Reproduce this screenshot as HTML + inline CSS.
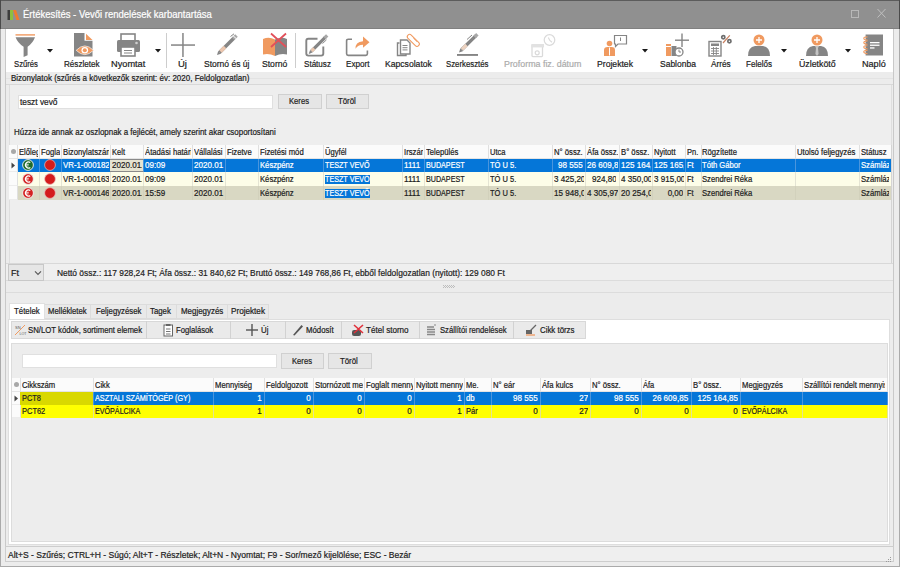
<!DOCTYPE html><html><head><meta charset='utf-8'><style>
*{margin:0;padding:0;box-sizing:border-box}
html,body{width:900px;height:567px;overflow:hidden;background:#efefef;font-family:"Liberation Sans",sans-serif;color:#1e1e1e;-webkit-text-stroke:0.2px currentColor}
body>div,body>svg{position:absolute}
.t{white-space:nowrap;position:absolute}
.g{position:absolute;overflow:hidden;white-space:nowrap;padding:0 1.2px 0 1.5px}
.w{overflow:hidden;height:100%}
.r{text-align:right;padding-right:2.4px}
</style></head><body><div style="left:0px;top:0px;width:900px;height:567px;background:#ececec;border:1px solid #aaaaaa"></div>
<div style="left:0px;top:0px;width:900px;height:29px;background:#909090;border-top:1px solid #5c5c5c;border-bottom:1px solid #808080"></div>
<div style="left:0px;top:0px;width:1px;height:29px;background:#4a4a4a"></div>
<div style="left:899px;top:0px;width:1px;height:29px;background:#4a4a4a"></div>
<svg style="left:7px;top:9px" width="13" height="12" viewBox="0 0 13 12"><rect x="0.5" y="1" width="2.5" height="10" fill="#3d3d3d"/><rect x="3" y="1" width="3" height="10" fill="#8cbf3f"/><polygon points="6,1 9,1 12.5,11 9.5,11" fill="#f07a2c"/></svg>
<div class="t" style="left:22.5px;top:6.5px;height:16px;line-height:16px;color:#ffffff"><span style="display:inline-block;vertical-align:top;font-size:10.3px;transform:scaleX(0.9218);transform-origin:left;">Értékesítés - Vevői rendelések karbantartása</span></div>
<svg style="left:850px;top:9px" width="40" height="12" viewBox="0 0 40 12"><rect x="1.5" y="1.5" width="7" height="7" fill="none" stroke="#b8b8b8" stroke-width="1"/><path d="M27.5 0 L35.5 8.5 M35.5 0 L27.5 8.5" stroke="#c0c0c0" stroke-width="1"/></svg>
<div style="left:6px;top:29px;width:887px;height:43.5px;background:#ffffff;border-bottom:1px solid #cacaca"></div>
<div style="left:5px;top:29px;width:1px;height:533px;background:#c9c9c9"></div>
<div style="left:893px;top:29px;width:1px;height:533px;background:#c9c9c9"></div>
<svg style="left:15px;top:33px" width="21" height="25" viewBox="0 0 21 25"><rect x="0.5" y="1.2" width="19.5" height="1.4" fill="#f09a60"/><path d="M0.6 4.3 H20 Q18 10 12.6 13.8 V22.2 L8.6 24 V13.8 Q2.6 10 0.6 4.3Z" fill="#858585"/></svg>
<svg style="left:73px;top:32px" width="22" height="26" viewBox="0 0 22 26"><polygon points="1,1 11.5,1 11.5,8.7 19.5,8.7 19.5,24.5 1,24.5" fill="#858585"/><polygon points="13,1.8 13,8 19.5,8" fill="#f09a60"/><path d="M3.2 18.3 Q11.8 9.5 20.5 18.3 Q11.8 27 3.2 18.3Z" fill="#f09a60" stroke="#f4f4f4" stroke-width="0.7"/><circle cx="11.8" cy="18.3" r="3.3" fill="#fff"/><circle cx="11.8" cy="18.3" r="2" fill="#f09a60"/></svg>
<svg style="left:116px;top:33px" width="25" height="24" viewBox="0 0 25 24"><rect x="5" y="1" width="14" height="7" fill="#fff" stroke="#858585" stroke-width="1.6"/><rect x="1" y="7" width="23" height="12" rx="1.5" fill="#858585"/><circle cx="20.5" cy="10" r="1.3" fill="#cfcfcf"/><rect x="5" y="14" width="14" height="9" fill="#fff" stroke="#858585" stroke-width="1.6"/><rect x="8" y="17" width="8" height="1" fill="#858585"/><rect x="8" y="19.5" width="8" height="1" fill="#858585"/></svg>
<div style="left:166px;top:33px;width:1px;height:35px;background:#cdcdcd"></div>
<svg style="left:170px;top:32px" width="26" height="26" viewBox="0 0 26 26"><rect x="1" y="12.3" width="24" height="1.5" fill="#858585"/><rect x="12.2" y="1" width="1.5" height="24" fill="#858585"/></svg>
<svg style="left:215px;top:33px" width="25" height="24" viewBox="0 0 25 24"><path d="M4.5 19.5 L19 5" stroke="#858585" stroke-width="3.6" stroke-linecap="butt"/><path d="M18.2 5.8 L21.5 2.5" stroke="#a8a8a8" stroke-width="3.6"/><path d="M19.5 4.5 L20.5 3.5" stroke="#fff" stroke-width="3.8" stroke-dasharray="0.7 0.9"/><path d="M15.5 3.5 L19 0.8" stroke="#858585" stroke-width="1"/><path d="M5.5 18.5 L10 14" stroke="#ecc6ae" stroke-width="3.6"/><polygon points="3.2,18 6,20.8 2,22" fill="#858585"/></svg>
<svg style="left:262px;top:32px" width="27" height="25" viewBox="0 0 27 25"><path d="M1 7 Q7 4.5 13 7.5 V24 Q7 21 1 22.5Z" fill="#f09a60"/><path d="M13 7.5 Q19 4.5 25 7 V22.5 Q19 21 13 24Z" fill="#858585"/><path d="M9 1.5 L24 15 M24 1.5 L9 15" stroke="#e2505a" stroke-width="1.8"/></svg>
<div style="left:295px;top:33px;width:1px;height:35px;background:#cdcdcd"></div>
<svg style="left:304px;top:33px" width="27" height="25" viewBox="0 0 27 25"><path d="M13.5 5.8 H4.3 Q2.3 5.8 2.3 7.8 V20.6 Q2.3 22.6 4.3 22.6 H17.3 Q19.3 22.6 19.3 20.6 V13.5" fill="none" stroke="#858585" stroke-width="1.9"/><path d="M7.2 18.4 L21.2 4.4" stroke="#fff" stroke-width="5.6"/><path d="M7.2 18.4 L21.2 4.4" stroke="#858585" stroke-width="3.3"/><path d="M7.6 18 L10.2 15.4" stroke="#e9c6ad" stroke-width="3.3"/><path d="M20.6 5 L23.2 2.4" stroke="#a8a8a8" stroke-width="3.3"/><path d="M18.5 10.5 L22.5 6.8" stroke="#858585" stroke-width="0.9"/><polygon points="6,17.2 8.4,19.6 4.6,21" fill="#858585"/></svg>
<svg style="left:345px;top:33px" width="26" height="24" viewBox="0 0 26 24"><path d="M7 6.2 H3.2 Q1.6 6.2 1.6 7.8 V20.8 Q1.6 22.4 3.2 22.4 H20.8 Q22.4 22.4 22.4 20.8 V17.5" fill="none" stroke="#858585" stroke-width="1.6"/><path d="M10.5 15.8 Q10 9 18 8.2 V3.5 L24.5 9.2 L18 14.8 V11.8 Q13 11.8 10.5 15.8Z" fill="#f09a60"/></svg>
<svg style="left:395px;top:33px" width="27" height="25" viewBox="0 0 27 25"><path d="M4.5 10 H2.5 V22.5 H11 V20.5" fill="none" stroke="#858585" stroke-width="1.4"/><path d="M5.5 7 H12 L15 10 V21 H5.5Z" fill="#fff" stroke="#858585" stroke-width="1.4"/><rect x="7.5" y="12" width="5" height="1" fill="#858585"/><rect x="7.5" y="14.2" width="5" height="1" fill="#858585"/><rect x="7.5" y="16.4" width="5" height="1" fill="#858585"/><rect x="13.5" y="-1.6" width="4.6" height="15" rx="2.3" transform="translate(2.5 1.5) rotate(-45 15.8 5.9)" fill="none" stroke="#f09a60" stroke-width="1.1"/><path d="M18.3 5 L22 8.7" stroke="#f09a60" stroke-width="0.9"/></svg>
<svg style="left:456px;top:33px" width="24" height="24" viewBox="0 0 24 24"><path d="M5.6 16.8 L20 2.6" stroke="#858585" stroke-width="3.4"/><path d="M6 16.4 L10.5 12" stroke="#ecd2c0" stroke-width="3.4"/><path d="M18.6 4 L21.4 1.2" stroke="#a8a8a8" stroke-width="3.4"/><path d="M11 6.5 L16 2" stroke="#858585" stroke-width="1"/><polygon points="4.3,15.6 6.9,18.2 3,19.6" fill="#858585"/><rect x="1" y="21" width="21" height="1.9" fill="#858585"/></svg>
<svg style="left:529px;top:33px" width="28" height="25" viewBox="0 0 28 25"><rect x="3" y="11.8" width="10.5" height="11.8" rx="0.8" fill="none" stroke="#dadada" stroke-width="1.3"/><rect x="2.4" y="11" width="12.6" height="3.4" fill="#e2e2e2"/><circle cx="8.2" cy="19.8" r="2" fill="none" stroke="#dadada" stroke-width="1.2"/><circle cx="20.5" cy="7" r="5.3" fill="none" stroke="#dadada" stroke-width="1.2"/><path d="M19.3 4.5 L20.8 7.5 L23 9.2" fill="none" stroke="#dadada" stroke-width="1.1"/></svg>
<svg style="left:602px;top:33px" width="27" height="25" viewBox="0 0 27 25"><circle cx="7.5" cy="10.5" r="2.8" fill="#f09a60"/><path d="M2 23 V17 Q2 14 5.5 14 H9.5 Q13 14 13 17 V23Z" fill="#f09a60"/><rect x="7" y="14.5" width="1" height="8" fill="#fff"/><path d="M12.5 2.5 H24.5 V11 H16 L13.5 13.5 V11 H12.5Z" fill="#fff" stroke="#858585" stroke-width="1.2"/><rect x="18" y="4.5" width="1" height="3.5" fill="#858585"/></svg>
<svg style="left:664px;top:32px" width="27" height="26" viewBox="0 0 27 26"><rect x="2" y="12" width="5" height="12" fill="#f09a60"/><rect x="7.5" y="14" width="5" height="10" fill="#858585"/><rect x="2" y="14" width="5" height="1" fill="#fff"/><circle cx="15" cy="20" r="4" fill="#fff" stroke="#858585" stroke-width="1.3"/><path d="M15 17.5 V20 H17" fill="none" stroke="#858585" stroke-width="1"/><rect x="11" y="7.5" width="14" height="1.4" fill="#858585"/><rect x="17.3" y="1.5" width="1.4" height="13.5" fill="#858585"/></svg>
<svg style="left:707px;top:33px" width="27" height="25" viewBox="0 0 27 25"><rect x="2" y="8.5" width="12" height="14.5" fill="#fff" stroke="#858585" stroke-width="1.4"/><rect x="4" y="10.5" width="8" height="2.5" fill="#858585"/><path d="M4 15.5 H12 M4 18 H12 M4 20.5 H12 M6.5 14 V22 M9.3 14 V22" stroke="#858585" stroke-width="0.9"/><circle cx="16.3" cy="4.2" r="1.6" fill="none" stroke="#6e6e6e" stroke-width="1.7"/><circle cx="22.4" cy="8.3" r="1.6" fill="none" stroke="#6e6e6e" stroke-width="1.7"/><path d="M16 10 L22.8 2.4" stroke="#c98060" stroke-width="1.2"/></svg>
<svg style="left:747px;top:32px" width="24" height="25" viewBox="0 0 24 25"><path d="M1 24 Q1 15 8 14 H16 Q23 15 23 24Z" fill="#858585"/><circle cx="12" cy="8" r="5.5" fill="#f09a60"/><path d="M12 5 V11 M9 8 H15" stroke="#fff" stroke-width="1.3"/></svg>
<svg style="left:805px;top:32px" width="24" height="25" viewBox="0 0 24 25"><path d="M1 24 Q1 15 8 14 H16 Q23 15 23 24Z" fill="#858585"/><circle cx="12" cy="8" r="5.5" fill="#f09a60"/><path d="M12 5 V11 M9 8 H15" stroke="#fff" stroke-width="1.3"/><polygon points="10,14 14,14 13,16 13.6,22 12,24 10.4,22 11,16" fill="#c4c4c4"/></svg>
<svg style="left:862px;top:33px" width="23" height="24" viewBox="0 0 23 24"><rect x="3.6" y="1.5" width="17.4" height="21" fill="#858585"/><rect x="8" y="9" width="9.5" height="1.3" fill="#fff"/><rect x="8" y="11.6" width="9.5" height="1.3" fill="#fff"/><rect x="8" y="14.3" width="4.5" height="1.3" fill="#fff"/><path d="M5.5 3.9 Q1.5 3.9 1.8 5.5 Q2 7.1 5.5 7.1" fill="none" stroke="#f09a60" stroke-width="1.1"/><path d="M5.5 8.0 Q1.5 8.0 1.8 9.6 Q2 11.2 5.5 11.2" fill="none" stroke="#f09a60" stroke-width="1.1"/><path d="M5.5 12.700000000000001 Q1.5 12.700000000000001 1.8 14.3 Q2 15.9 5.5 15.9" fill="none" stroke="#f09a60" stroke-width="1.1"/><path d="M5.5 17.4 Q1.5 17.4 1.8 19 Q2 20.6 5.5 20.6" fill="none" stroke="#f09a60" stroke-width="1.1"/></svg>
<svg style="left:46.5px;top:49px" width="6" height="4" viewBox="0 0 6 4"><polygon points="0,0 6,0 3,3.5" fill="#1a1a1a"/></svg>
<svg style="left:154.5px;top:49px" width="6" height="4" viewBox="0 0 6 4"><polygon points="0,0 6,0 3,3.5" fill="#1a1a1a"/></svg>
<svg style="left:642px;top:49px" width="6" height="4" viewBox="0 0 6 4"><polygon points="0,0 6,0 3,3.5" fill="#1a1a1a"/></svg>
<svg style="left:781px;top:49px" width="6" height="4" viewBox="0 0 6 4"><polygon points="0,0 6,0 3,3.5" fill="#1a1a1a"/></svg>
<svg style="left:844.5px;top:49px" width="6" height="4" viewBox="0 0 6 4"><polygon points="0,0 6,0 3,3.5" fill="#1a1a1a"/></svg>
<div class="t" style="left:13.6px;top:57.0px;height:14px;line-height:14px;color:#1c1c1c"><span style="display:inline-block;vertical-align:top;font-size:8.9px;transform:scaleX(0.8663);transform-origin:left;">Szűrés</span></div>
<div class="t" style="left:63.6px;top:57.0px;height:14px;line-height:14px;color:#1c1c1c"><span style="display:inline-block;vertical-align:top;font-size:8.9px;transform:scaleX(0.9109);transform-origin:left;">Részletek</span></div>
<div class="t" style="left:111.19999999999999px;top:57.0px;height:14px;line-height:14px;color:#1c1c1c"><span style="display:inline-block;vertical-align:top;font-size:8.9px;transform:scaleX(1.0380);transform-origin:left;">Nyomtat</span></div>
<div class="t" style="left:178.0px;top:57.0px;height:14px;line-height:14px;color:#1c1c1c"><span style="display:inline-block;vertical-align:top;font-size:8.9px;transform:scaleX(1.0708);transform-origin:left;">Új</span></div>
<div class="t" style="left:204.4px;top:57.0px;height:14px;line-height:14px;color:#1c1c1c"><span style="display:inline-block;vertical-align:top;font-size:8.9px;transform:scaleX(0.9599);transform-origin:left;">Stornó és új</span></div>
<div class="t" style="left:262.0px;top:57.0px;height:14px;line-height:14px;color:#1c1c1c"><span style="display:inline-block;vertical-align:top;font-size:8.9px;transform:scaleX(0.9685);transform-origin:left;">Stornó</span></div>
<div class="t" style="left:303.5px;top:57.0px;height:14px;line-height:14px;color:#1c1c1c"><span style="display:inline-block;vertical-align:top;font-size:8.9px;transform:scaleX(0.9095);transform-origin:left;">Státusz</span></div>
<div class="t" style="left:345.6px;top:57.0px;height:14px;line-height:14px;color:#1c1c1c"><span style="display:inline-block;vertical-align:top;font-size:8.9px;transform:scaleX(0.9173);transform-origin:left;">Export</span></div>
<div class="t" style="left:384.6px;top:57.0px;height:14px;line-height:14px;color:#1c1c1c"><span style="display:inline-block;vertical-align:top;font-size:8.9px;transform:scaleX(0.9693);transform-origin:left;">Kapcsolatok</span></div>
<div class="t" style="left:446.40000000000003px;top:57.0px;height:14px;line-height:14px;color:#1c1c1c"><span style="display:inline-block;vertical-align:top;font-size:8.9px;transform:scaleX(0.8788);transform-origin:left;">Szerkesztés</span></div>
<div class="t" style="left:504.0px;top:57.0px;height:14px;line-height:14px;color:#ababab"><span style="display:inline-block;vertical-align:top;font-size:8.9px;transform:scaleX(0.9991);transform-origin:left;">Proforma fiz. dátum</span></div>
<div class="t" style="left:597.1px;top:57.0px;height:14px;line-height:14px;color:#1c1c1c"><span style="display:inline-block;vertical-align:top;font-size:8.9px;transform:scaleX(0.9729);transform-origin:left;">Projektek</span></div>
<div class="t" style="left:659.6px;top:57.0px;height:14px;line-height:14px;color:#1c1c1c"><span style="display:inline-block;vertical-align:top;font-size:8.9px;transform:scaleX(0.9570);transform-origin:left;">Sablonba</span></div>
<div class="t" style="left:710.6px;top:57.0px;height:14px;line-height:14px;color:#1c1c1c"><span style="display:inline-block;vertical-align:top;font-size:8.9px;transform:scaleX(0.9310);transform-origin:left;">Árrés</span></div>
<div class="t" style="left:745.6px;top:57.0px;height:14px;line-height:14px;color:#1c1c1c"><span style="display:inline-block;vertical-align:top;font-size:8.9px;transform:scaleX(0.9061);transform-origin:left;">Felelős</span></div>
<div class="t" style="left:798.6px;top:57.0px;height:14px;line-height:14px;color:#1c1c1c"><span style="display:inline-block;vertical-align:top;font-size:8.9px;transform:scaleX(0.9918);transform-origin:left;">Üzletkötő</span></div>
<div class="t" style="left:861.6px;top:57.0px;height:14px;line-height:14px;color:#1c1c1c"><span style="display:inline-block;vertical-align:top;font-size:8.9px;transform:scaleX(1.0234);transform-origin:left;">Napló</span></div>
<div style="left:6px;top:72px;width:887px;height:13px;background:#ececec;border-bottom:1px solid #d8d8d8"></div>
<div style="left:6px;top:78px;width:887px;height:1px;background:#e3e3e3"></div>
<div class="t" style="left:11.3px;top:72.0px;height:13px;line-height:13px;color:#202020"><span style="display:inline-block;vertical-align:top;font-size:8.3px;transform:scaleX(0.9643);transform-origin:left;">Bizonylatok (szűrés a következők szerint: év: 2020, Feldolgozatlan)</span></div>
<div style="left:8.5px;top:85px;width:883px;height:178px;background:#eeeeee;border-left:1px solid #dedede;border-right:1px solid #dedede"></div>
<div style="left:18px;top:95px;width:255px;height:14px;background:#fff;border:1px solid #e0e0e0"></div>
<div class="t" style="left:19.5px;top:95.5px;height:13px;line-height:13px;color:#202020"><span style="display:inline-block;vertical-align:top;font-size:8.6px;transform:scaleX(0.9684);transform-origin:left;">teszt vevő</span></div>
<div style="left:278px;top:94px;width:44px;height:15px;background:#e6e6e6;border:1px solid #d0d0d0"></div>
<div class="t" style="left:288.7px;top:95.3px;height:13px;line-height:13px;color:#202020"><span style="display:inline-block;vertical-align:top;font-size:8.6px;transform:scaleX(0.8901);transform-origin:left;">Keres</span></div>
<div style="left:326px;top:94px;width:43px;height:15px;background:#e6e6e6;border:1px solid #d0d0d0"></div>
<div class="t" style="left:337.5px;top:95.3px;height:13px;line-height:13px;color:#202020"><span style="display:inline-block;vertical-align:top;font-size:8.6px;transform:scaleX(0.9083);transform-origin:left;">Töröl</span></div>
<div class="t" style="left:13.8px;top:126.0px;height:13px;line-height:13px;color:#202020"><span style="display:inline-block;vertical-align:top;font-size:8.6px;transform:scaleX(0.9225);transform-origin:left;">Húzza ide annak az oszlopnak a fejlécét, amely szerint akar csoportosítani</span></div>
<div style="left:9px;top:145px;width:882px;height:13.5px;background:#fbfbfb;border-bottom:1px solid #e4e4e4"></div>
<div class="g" style="left:9px;top:145px;width:8.8px;height:13.5px;line-height:15px;border-right:1px solid #e0e0e0;color:#202020"><div class="w"></div></div>
<div class="g" style="left:17px;top:145px;width:22.8px;height:13.5px;line-height:15px;border-right:1px solid #e0e0e0;color:#202020"><div class="w"><span style="display:inline-block;vertical-align:top;font-size:8.4px;transform:scaleX(0.9095);transform-origin:left;">Előleg</span></div></div>
<div class="g" style="left:39px;top:145px;width:22.8px;height:13.5px;line-height:15px;border-right:1px solid #e0e0e0;color:#202020"><div class="w"><span style="display:inline-block;vertical-align:top;font-size:8.4px;transform:scaleX(0.9152);transform-origin:left;">Foglalás</span></div></div>
<div class="g" style="left:61px;top:145px;width:49.8px;height:13.5px;line-height:15px;border-right:1px solid #e0e0e0;color:#202020"><div class="w"><span style="display:inline-block;vertical-align:top;font-size:8.4px;transform:scaleX(0.9194);transform-origin:left;">Bizonylatszám</span></div></div>
<div class="g" style="left:110px;top:145px;width:33.8px;height:13.5px;line-height:15px;border-right:1px solid #e0e0e0;color:#202020"><div class="w"><span style="display:inline-block;vertical-align:top;font-size:8.4px;transform:scaleX(0.8987);transform-origin:left;">Kelt</span></div></div>
<div class="g" style="left:143px;top:145px;width:49.8px;height:13.5px;line-height:15px;border-right:1px solid #e0e0e0;color:#202020"><div class="w"><span style="display:inline-block;vertical-align:top;font-size:8.4px;transform:scaleX(0.9213);transform-origin:left;">Átadási határidő</span></div></div>
<div class="g" style="left:192px;top:145px;width:33.8px;height:13.5px;line-height:15px;border-right:1px solid #e0e0e0;color:#202020"><div class="w"><span style="display:inline-block;vertical-align:top;font-size:8.4px;transform:scaleX(0.9139);transform-origin:left;">Vállalási</span></div></div>
<div class="g" style="left:225px;top:145px;width:34.3px;height:13.5px;line-height:15px;border-right:1px solid #e0e0e0;color:#202020"><div class="w"><span style="display:inline-block;vertical-align:top;font-size:8.4px;transform:scaleX(0.9132);transform-origin:left;">Fizetve</span></div></div>
<div class="g" style="left:258.5px;top:145px;width:65.3px;height:13.5px;line-height:15px;border-right:1px solid #e0e0e0;color:#202020"><div class="w"><span style="display:inline-block;vertical-align:top;font-size:8.4px;transform:scaleX(0.9204);transform-origin:left;">Fizetési mód</span></div></div>
<div class="g" style="left:323px;top:145px;width:80.40000000000002px;height:13.5px;line-height:15px;border-right:1px solid #e0e0e0;color:#202020"><div class="w"><span style="display:inline-block;vertical-align:top;font-size:8.4px;transform:scaleX(0.9084);transform-origin:left;">Ügyfél</span></div></div>
<div class="g" style="left:402.6px;top:145px;width:22.199999999999978px;height:13.5px;line-height:15px;border-right:1px solid #e0e0e0;color:#202020"><div class="w"><span style="display:inline-block;vertical-align:top;font-size:8.4px;transform:scaleX(0.9202);transform-origin:left;">Irszám</span></div></div>
<div class="g" style="left:424px;top:145px;width:64.8px;height:13.5px;line-height:15px;border-right:1px solid #e0e0e0;color:#202020"><div class="w"><span style="display:inline-block;vertical-align:top;font-size:8.4px;transform:scaleX(0.9167);transform-origin:left;">Település</span></div></div>
<div class="g" style="left:488px;top:145px;width:65.40000000000002px;height:13.5px;line-height:15px;border-right:1px solid #e0e0e0;color:#202020"><div class="w"><span style="display:inline-block;vertical-align:top;font-size:8.4px;transform:scaleX(0.9014);transform-origin:left;">Utca</span></div></div>
<div class="g" style="left:552.6px;top:145px;width:33.8px;height:13.5px;line-height:15px;border-right:1px solid #e0e0e0;color:#202020"><div class="w"><span style="display:inline-block;vertical-align:top;font-size:8.4px;transform:scaleX(0.9195);transform-origin:left;">N° össz.</span></div></div>
<div class="g" style="left:585.6px;top:145px;width:34.199999999999974px;height:13.5px;line-height:15px;border-right:1px solid #e0e0e0;color:#202020"><div class="w"><span style="display:inline-block;vertical-align:top;font-size:8.4px;transform:scaleX(0.9187);transform-origin:left;">Áfa össz.</span></div></div>
<div class="g" style="left:619px;top:145px;width:34.00000000000004px;height:13.5px;line-height:15px;border-right:1px solid #e0e0e0;color:#202020"><div class="w"><span style="display:inline-block;vertical-align:top;font-size:8.4px;transform:scaleX(0.9205);transform-origin:left;">B° össz.</span></div></div>
<div class="g" style="left:652.2px;top:145px;width:34.09999999999995px;height:13.5px;line-height:15px;border-right:1px solid #e0e0e0;color:#202020"><div class="w"><span style="display:inline-block;vertical-align:top;font-size:8.4px;transform:scaleX(0.9084);transform-origin:left;">Nyitott</span></div></div>
<div class="g" style="left:685.5px;top:145px;width:16.099999999999955px;height:13.5px;line-height:15px;border-right:1px solid #e0e0e0;color:#202020"><div class="w"><span style="display:inline-block;vertical-align:top;font-size:8.4px;transform:scaleX(0.8994);transform-origin:left;">Pn.</span></div></div>
<div class="g" style="left:700.8px;top:145px;width:95.50000000000004px;height:13.5px;line-height:15px;border-right:1px solid #e0e0e0;color:#202020"><div class="w"><span style="display:inline-block;vertical-align:top;font-size:8.4px;transform:scaleX(0.9154);transform-origin:left;">Rögzítette</span></div></div>
<div class="g" style="left:795.5px;top:145px;width:64.8px;height:13.5px;line-height:15px;border-right:1px solid #e0e0e0;color:#202020"><div class="w"><span style="display:inline-block;vertical-align:top;font-size:8.4px;transform:scaleX(0.9210);transform-origin:left;">Utolsó feljegyzés</span></div></div>
<div class="g" style="left:859.5px;top:145px;width:32.00000000000004px;height:13.5px;line-height:15px;border-right:1px solid #e0e0e0;color:#202020"><div class="w"><span style="display:inline-block;vertical-align:top;font-size:8.4px;transform:scaleX(0.9124);transform-origin:left;">Státusz</span></div></div>
<div style="left:11px;top:149px;width:5px;height:5px;border-radius:50%;background:#a8a8a8"></div>
<div style="left:18px;top:158.5px;width:873px;height:13.5px;background:#0576d8"></div>
<div style="left:9px;top:158.5px;width:9px;height:13.5px;background:#fbfbfb;border-right:1px solid #e0e0e0;border-bottom:1px solid #ececec"></div>
<div style="left:17px;top:158.5px;width:22.8px;height:13.5px;border-right:1px solid #4a95dd"><svg style="position:absolute;left:5px;top:0.5px" width="12" height="12" viewBox="0 0 12 12"><circle cx="6" cy="6" r="5.4" fill="#1f6b2c" stroke="#f2f2f2" stroke-width="0.9"/><path d="M8.3 3.6 A3 3 0 1 0 8.3 8.4" fill="none" stroke="#fff" stroke-width="1.2"/><path d="M3.2 5.3 H6.8 M3.2 6.9 H6.6" stroke="#fff" stroke-width="0.8"/></svg></div>
<div style="left:39px;top:158.5px;width:22.8px;height:13.5px;border-right:1px solid #4a95dd"><svg style="position:absolute;left:5px;top:0.5px" width="12" height="12" viewBox="0 0 12 12"><circle cx="6" cy="6" r="5.4" fill="#d41c1c" stroke="#ecc0c0" stroke-width="0.7"/></svg></div>
<div class="g" style="left:61px;top:158.5px;width:49.8px;height:13.5px;line-height:13.5px;color:#ffffff;border-right:1px solid #4a95dd;"><div class="w"><span style="display:inline-block;vertical-align:top;font-size:8.4px;transform:scaleX(0.9364);transform-origin:left;">VR-1-000182</span></div></div>
<div class="g" style="left:110px;top:158.5px;width:33.8px;height:13.5px;line-height:13.5px;color:#202020;border-right:1px solid #4a95dd;background:#e6e4d2;border-top:1px solid #8a8a8a;border-bottom:1px solid #8a8a8a;line-height:11.5px"><div class="w"><span style="display:inline-block;vertical-align:top;font-size:8.4px;transform:scaleX(0.9619);transform-origin:left;">2020.01.13</span></div></div>
<div class="g" style="left:143px;top:158.5px;width:49.8px;height:13.5px;line-height:13.5px;color:#ffffff;border-right:1px solid #4a95dd;"><div class="w"><span style="display:inline-block;vertical-align:top;font-size:8.4px;transform:scaleX(0.9619);transform-origin:left;">09:09</span></div></div>
<div class="g" style="left:192px;top:158.5px;width:33.8px;height:13.5px;line-height:13.5px;color:#ffffff;border-right:1px solid #4a95dd;"><div class="w"><span style="display:inline-block;vertical-align:top;font-size:8.4px;transform:scaleX(0.9622);transform-origin:left;">2020.01</span></div></div>
<div class="g" style="left:225px;top:158.5px;width:34.3px;height:13.5px;line-height:13.5px;color:#ffffff;border-right:1px solid #4a95dd;"><div class="w"></div></div>
<div class="g" style="left:258.5px;top:158.5px;width:65.3px;height:13.5px;line-height:13.5px;color:#ffffff;border-right:1px solid #4a95dd;"><div class="w"><span style="display:inline-block;vertical-align:top;font-size:8.4px;transform:scaleX(0.9159);transform-origin:left;">Készpénz</span></div></div>
<div class="g" style="left:323px;top:158.5px;width:80.40000000000002px;height:13.5px;line-height:13.5px;color:#ffffff;border-right:1px solid #4a95dd;"><div class="w"><span style="display:inline-block;vertical-align:top;font-size:8.4px;transform:scaleX(0.8584);transform-origin:left;">TESZT VEVŐ</span></div></div>
<div class="g" style="left:402.6px;top:158.5px;width:22.199999999999978px;height:13.5px;line-height:13.5px;color:#ffffff;border-right:1px solid #4a95dd;"><div class="w"><span style="display:inline-block;vertical-align:top;font-size:8.4px;transform:scaleX(0.9630);transform-origin:left;">1111</span></div></div>
<div class="g" style="left:424px;top:158.5px;width:64.8px;height:13.5px;line-height:13.5px;color:#ffffff;border-right:1px solid #4a95dd;"><div class="w"><span style="display:inline-block;vertical-align:top;font-size:8.4px;transform:scaleX(0.8540);transform-origin:left;">BUDAPEST</span></div></div>
<div class="g" style="left:488px;top:158.5px;width:65.40000000000002px;height:13.5px;line-height:13.5px;color:#ffffff;border-right:1px solid #4a95dd;"><div class="w"><span style="display:inline-block;vertical-align:top;font-size:8.4px;transform:scaleX(0.8949);transform-origin:left;">TÓ U 5.</span></div></div>
<div class="g r" style="left:552.6px;top:158.5px;width:33.8px;height:13.5px;line-height:13.5px;color:#ffffff;border-right:1px solid #4a95dd;"><div class="w"><span style="display:inline-block;vertical-align:top;font-size:8.4px;transform:scaleX(0.9621);transform-origin:right;">98 555</span></div></div>
<div class="g" style="left:585.6px;top:158.5px;width:34.199999999999974px;height:13.5px;line-height:13.5px;color:#ffffff;border-right:1px solid #4a95dd;"><div class="w"><span style="display:inline-block;vertical-align:top;font-size:8.4px;transform:scaleX(0.9618);transform-origin:left;">26 609,85</span></div></div>
<div class="g" style="left:619px;top:158.5px;width:34.00000000000004px;height:13.5px;line-height:13.5px;color:#ffffff;border-right:1px solid #4a95dd;"><div class="w"><span style="display:inline-block;vertical-align:top;font-size:8.4px;transform:scaleX(0.9619);transform-origin:left;">125 164,85</span></div></div>
<div class="g" style="left:652.2px;top:158.5px;width:34.09999999999995px;height:13.5px;line-height:13.5px;color:#ffffff;border-right:1px solid #4a95dd;"><div class="w"><span style="display:inline-block;vertical-align:top;font-size:8.4px;transform:scaleX(0.9619);transform-origin:left;">125 165,00</span></div></div>
<div class="g" style="left:685.5px;top:158.5px;width:16.099999999999955px;height:13.5px;line-height:13.5px;color:#ffffff;border-right:1px solid #4a95dd;"><div class="w"><span style="display:inline-block;vertical-align:top;font-size:8.4px;transform:scaleX(0.8768);transform-origin:left;">Ft</span></div></div>
<div class="g" style="left:700.8px;top:158.5px;width:95.50000000000004px;height:13.5px;line-height:13.5px;color:#ffffff;border-right:1px solid #4a95dd;"><div class="w"><span style="display:inline-block;vertical-align:top;font-size:8.4px;transform:scaleX(0.9084);transform-origin:left;">Tóth Gábor</span></div></div>
<div class="g" style="left:795.5px;top:158.5px;width:64.8px;height:13.5px;line-height:13.5px;color:#ffffff;border-right:1px solid #4a95dd;"><div class="w"></div></div>
<div class="g" style="left:859.5px;top:158.5px;width:32.00000000000004px;height:13.5px;line-height:13.5px;color:#ffffff;border-right:1px solid #4a95dd;"><div class="w"><span style="display:inline-block;vertical-align:top;font-size:8.4px;transform:scaleX(0.9170);transform-origin:left;">Számlázva</span></div></div>
<div style="left:18px;top:172px;width:873px;height:14px;background:#fdfde8"></div>
<div style="left:9px;top:172px;width:9px;height:14px;background:#fbfbfb;border-right:1px solid #e0e0e0;border-bottom:1px solid #ececec"></div>
<div style="left:17px;top:172px;width:22.8px;height:14px;border-right:1px solid #e4e4d4"><svg style="position:absolute;left:5px;top:0.5px" width="12" height="12" viewBox="0 0 12 12"><circle cx="6" cy="6" r="5.4" fill="#d42222" stroke="#f2f2f2" stroke-width="0.9"/><path d="M8.3 3.6 A3 3 0 1 0 8.3 8.4" fill="none" stroke="#fff" stroke-width="1.2"/><path d="M3.2 5.3 H6.8 M3.2 6.9 H6.6" stroke="#fff" stroke-width="0.8"/></svg></div>
<div style="left:39px;top:172px;width:22.8px;height:14px;border-right:1px solid #e4e4d4"><svg style="position:absolute;left:5px;top:0.5px" width="12" height="12" viewBox="0 0 12 12"><circle cx="6" cy="6" r="5.4" fill="#d41c1c" stroke="#ecc0c0" stroke-width="0.7"/></svg></div>
<div class="g" style="left:61px;top:172px;width:49.8px;height:14px;line-height:14px;color:#202020;border-right:1px solid #e4e4d4;"><div class="w"><span style="display:inline-block;vertical-align:top;font-size:8.4px;transform:scaleX(0.9364);transform-origin:left;">VR-1-000163</span></div></div>
<div class="g" style="left:110px;top:172px;width:33.8px;height:14px;line-height:14px;color:#202020;border-right:1px solid #e4e4d4;"><div class="w"><span style="display:inline-block;vertical-align:top;font-size:8.4px;transform:scaleX(0.9619);transform-origin:left;">2020.01.13</span></div></div>
<div class="g" style="left:143px;top:172px;width:49.8px;height:14px;line-height:14px;color:#202020;border-right:1px solid #e4e4d4;"><div class="w"><span style="display:inline-block;vertical-align:top;font-size:8.4px;transform:scaleX(0.9619);transform-origin:left;">09:09</span></div></div>
<div class="g" style="left:192px;top:172px;width:33.8px;height:14px;line-height:14px;color:#202020;border-right:1px solid #e4e4d4;"><div class="w"><span style="display:inline-block;vertical-align:top;font-size:8.4px;transform:scaleX(0.9622);transform-origin:left;">2020.01</span></div></div>
<div class="g" style="left:225px;top:172px;width:34.3px;height:14px;line-height:14px;color:#202020;border-right:1px solid #e4e4d4;"><div class="w"></div></div>
<div class="g" style="left:258.5px;top:172px;width:65.3px;height:14px;line-height:14px;color:#202020;border-right:1px solid #e4e4d4;"><div class="w"><span style="display:inline-block;vertical-align:top;font-size:8.4px;transform:scaleX(0.9159);transform-origin:left;">Készpénz</span></div></div>
<div class="g" style="left:323px;top:172px;width:80.40000000000002px;height:14px;line-height:14px;color:#202020;border-right:1px solid #e4e4d4;"><div class="w"><span style="position:relative;display:inline-block;height:9px;line-height:9px;width:45.9px;background:#0576d8;color:#fff;vertical-align:middle;margin-top:-1px"><span style="display:inline-block;vertical-align:top;font-size:8.4px;transform:scaleX(0.8584);transform-origin:left;">TESZT VEVŐ</span></span></div></div>
<div class="g" style="left:402.6px;top:172px;width:22.199999999999978px;height:14px;line-height:14px;color:#202020;border-right:1px solid #e4e4d4;"><div class="w"><span style="display:inline-block;vertical-align:top;font-size:8.4px;transform:scaleX(0.9630);transform-origin:left;">1111</span></div></div>
<div class="g" style="left:424px;top:172px;width:64.8px;height:14px;line-height:14px;color:#202020;border-right:1px solid #e4e4d4;"><div class="w"><span style="display:inline-block;vertical-align:top;font-size:8.4px;transform:scaleX(0.8540);transform-origin:left;">BUDAPEST</span></div></div>
<div class="g" style="left:488px;top:172px;width:65.40000000000002px;height:14px;line-height:14px;color:#202020;border-right:1px solid #e4e4d4;"><div class="w"><span style="display:inline-block;vertical-align:top;font-size:8.4px;transform:scaleX(0.8949);transform-origin:left;">TÓ U 5.</span></div></div>
<div class="g" style="left:552.6px;top:172px;width:33.8px;height:14px;line-height:14px;color:#202020;border-right:1px solid #e4e4d4;"><div class="w"><span style="display:inline-block;vertical-align:top;font-size:8.4px;transform:scaleX(0.9616);transform-origin:left;">3 425,20</span></div></div>
<div class="g r" style="left:585.6px;top:172px;width:34.199999999999974px;height:14px;line-height:14px;color:#202020;border-right:1px solid #e4e4d4;"><div class="w"><span style="display:inline-block;vertical-align:top;font-size:8.4px;transform:scaleX(0.9621);transform-origin:right;">924,80</span></div></div>
<div class="g" style="left:619px;top:172px;width:34.00000000000004px;height:14px;line-height:14px;color:#202020;border-right:1px solid #e4e4d4;"><div class="w"><span style="display:inline-block;vertical-align:top;font-size:8.4px;transform:scaleX(0.9616);transform-origin:left;">4 350,00</span></div></div>
<div class="g" style="left:652.2px;top:172px;width:34.09999999999995px;height:14px;line-height:14px;color:#202020;border-right:1px solid #e4e4d4;"><div class="w"><span style="display:inline-block;vertical-align:top;font-size:8.4px;transform:scaleX(0.9616);transform-origin:left;">3 915,00</span></div></div>
<div class="g" style="left:685.5px;top:172px;width:16.099999999999955px;height:14px;line-height:14px;color:#202020;border-right:1px solid #e4e4d4;"><div class="w"><span style="display:inline-block;vertical-align:top;font-size:8.4px;transform:scaleX(0.8768);transform-origin:left;">Ft</span></div></div>
<div class="g" style="left:700.8px;top:172px;width:95.50000000000004px;height:14px;line-height:14px;color:#202020;border-right:1px solid #e4e4d4;"><div class="w"><span style="display:inline-block;vertical-align:top;font-size:8.4px;transform:scaleX(0.9126);transform-origin:left;">Szendrei Réka</span></div></div>
<div class="g" style="left:795.5px;top:172px;width:64.8px;height:14px;line-height:14px;color:#202020;border-right:1px solid #e4e4d4;"><div class="w"></div></div>
<div class="g" style="left:859.5px;top:172px;width:32.00000000000004px;height:14px;line-height:14px;color:#202020;border-right:1px solid #e4e4d4;"><div class="w"><span style="display:inline-block;vertical-align:top;font-size:8.4px;transform:scaleX(0.9170);transform-origin:left;">Számlázva</span></div></div>
<div style="left:18px;top:186px;width:873px;height:14px;background:#d9d8c3"></div>
<div style="left:9px;top:186px;width:9px;height:14px;background:#fbfbfb;border-right:1px solid #e0e0e0;border-bottom:1px solid #ececec"></div>
<div style="left:17px;top:186px;width:22.8px;height:14px;border-right:1px solid #d2d1bc"><svg style="position:absolute;left:5px;top:0.5px" width="12" height="12" viewBox="0 0 12 12"><circle cx="6" cy="6" r="5.4" fill="#d42222" stroke="#f2f2f2" stroke-width="0.9"/><path d="M8.3 3.6 A3 3 0 1 0 8.3 8.4" fill="none" stroke="#fff" stroke-width="1.2"/><path d="M3.2 5.3 H6.8 M3.2 6.9 H6.6" stroke="#fff" stroke-width="0.8"/></svg></div>
<div style="left:39px;top:186px;width:22.8px;height:14px;border-right:1px solid #d2d1bc"><svg style="position:absolute;left:5px;top:0.5px" width="12" height="12" viewBox="0 0 12 12"><circle cx="6" cy="6" r="5.4" fill="#d41c1c" stroke="#ecc0c0" stroke-width="0.7"/></svg></div>
<div class="g" style="left:61px;top:186px;width:49.8px;height:14px;line-height:14px;color:#202020;border-right:1px solid #d2d1bc;"><div class="w"><span style="display:inline-block;vertical-align:top;font-size:8.4px;transform:scaleX(0.9364);transform-origin:left;">VR-1-000146</span></div></div>
<div class="g" style="left:110px;top:186px;width:33.8px;height:14px;line-height:14px;color:#202020;border-right:1px solid #d2d1bc;"><div class="w"><span style="display:inline-block;vertical-align:top;font-size:8.4px;transform:scaleX(0.9619);transform-origin:left;">2020.01.13</span></div></div>
<div class="g" style="left:143px;top:186px;width:49.8px;height:14px;line-height:14px;color:#202020;border-right:1px solid #d2d1bc;"><div class="w"><span style="display:inline-block;vertical-align:top;font-size:8.4px;transform:scaleX(0.9619);transform-origin:left;">15:59</span></div></div>
<div class="g" style="left:192px;top:186px;width:33.8px;height:14px;line-height:14px;color:#202020;border-right:1px solid #d2d1bc;"><div class="w"><span style="display:inline-block;vertical-align:top;font-size:8.4px;transform:scaleX(0.9622);transform-origin:left;">2020.01</span></div></div>
<div class="g" style="left:225px;top:186px;width:34.3px;height:14px;line-height:14px;color:#202020;border-right:1px solid #d2d1bc;"><div class="w"></div></div>
<div class="g" style="left:258.5px;top:186px;width:65.3px;height:14px;line-height:14px;color:#202020;border-right:1px solid #d2d1bc;"><div class="w"><span style="display:inline-block;vertical-align:top;font-size:8.4px;transform:scaleX(0.9159);transform-origin:left;">Készpénz</span></div></div>
<div class="g" style="left:323px;top:186px;width:80.40000000000002px;height:14px;line-height:14px;color:#202020;border-right:1px solid #d2d1bc;"><div class="w"><span style="position:relative;display:inline-block;height:9px;line-height:9px;width:45.9px;background:#0576d8;color:#fff;vertical-align:middle;margin-top:-1px"><span style="display:inline-block;vertical-align:top;font-size:8.4px;transform:scaleX(0.8584);transform-origin:left;">TESZT VEVŐ</span></span></div></div>
<div class="g" style="left:402.6px;top:186px;width:22.199999999999978px;height:14px;line-height:14px;color:#202020;border-right:1px solid #d2d1bc;"><div class="w"><span style="display:inline-block;vertical-align:top;font-size:8.4px;transform:scaleX(0.9630);transform-origin:left;">1111</span></div></div>
<div class="g" style="left:424px;top:186px;width:64.8px;height:14px;line-height:14px;color:#202020;border-right:1px solid #d2d1bc;"><div class="w"><span style="display:inline-block;vertical-align:top;font-size:8.4px;transform:scaleX(0.8540);transform-origin:left;">BUDAPEST</span></div></div>
<div class="g" style="left:488px;top:186px;width:65.40000000000002px;height:14px;line-height:14px;color:#202020;border-right:1px solid #d2d1bc;"><div class="w"><span style="display:inline-block;vertical-align:top;font-size:8.4px;transform:scaleX(0.8949);transform-origin:left;">TÓ U 5.</span></div></div>
<div class="g" style="left:552.6px;top:186px;width:33.8px;height:14px;line-height:14px;color:#202020;border-right:1px solid #d2d1bc;"><div class="w"><span style="display:inline-block;vertical-align:top;font-size:8.4px;transform:scaleX(0.9618);transform-origin:left;">15 948,00</span></div></div>
<div class="g" style="left:585.6px;top:186px;width:34.199999999999974px;height:14px;line-height:14px;color:#202020;border-right:1px solid #d2d1bc;"><div class="w"><span style="display:inline-block;vertical-align:top;font-size:8.4px;transform:scaleX(0.9616);transform-origin:left;">4 305,97</span></div></div>
<div class="g" style="left:619px;top:186px;width:34.00000000000004px;height:14px;line-height:14px;color:#202020;border-right:1px solid #d2d1bc;"><div class="w"><span style="display:inline-block;vertical-align:top;font-size:8.4px;transform:scaleX(0.9618);transform-origin:left;">20 254,00</span></div></div>
<div class="g r" style="left:652.2px;top:186px;width:34.09999999999995px;height:14px;line-height:14px;color:#202020;border-right:1px solid #d2d1bc;"><div class="w"><span style="display:inline-block;vertical-align:top;font-size:8.4px;transform:scaleX(0.9616);transform-origin:right;">0,00</span></div></div>
<div class="g" style="left:685.5px;top:186px;width:16.099999999999955px;height:14px;line-height:14px;color:#202020;border-right:1px solid #d2d1bc;"><div class="w"><span style="display:inline-block;vertical-align:top;font-size:8.4px;transform:scaleX(0.8768);transform-origin:left;">Ft</span></div></div>
<div class="g" style="left:700.8px;top:186px;width:95.50000000000004px;height:14px;line-height:14px;color:#202020;border-right:1px solid #d2d1bc;"><div class="w"><span style="display:inline-block;vertical-align:top;font-size:8.4px;transform:scaleX(0.9126);transform-origin:left;">Szendrei Réka</span></div></div>
<div class="g" style="left:795.5px;top:186px;width:64.8px;height:14px;line-height:14px;color:#202020;border-right:1px solid #d2d1bc;"><div class="w"></div></div>
<div class="g" style="left:859.5px;top:186px;width:32.00000000000004px;height:14px;line-height:14px;color:#202020;border-right:1px solid #d2d1bc;"><div class="w"><span style="display:inline-block;vertical-align:top;font-size:8.4px;transform:scaleX(0.9170);transform-origin:left;">Számlázva</span></div></div>
<svg style="left:11px;top:162px" width="5" height="7" viewBox="0 0 5 7"><polygon points="0.5,0.5 4,3.5 0.5,6.5" fill="#444"/></svg>
<div style="left:890.5px;top:145px;width:1px;height:119px;background:#d4d4d4"></div>
<div style="left:6px;top:263px;width:887px;height:1px;background:#d8d8d8"></div>
<div style="left:6px;top:264px;width:887px;height:17px;background:#efefef;border-bottom:1px solid #dcdcdc"></div>
<div style="left:8px;top:264.3px;width:36px;height:17px;background:#e6e6e6;border:1px solid #c8c8c8;border-bottom-width:1.5px"></div>
<div class="t" style="left:11px;top:266.0px;height:14px;line-height:14px;color:#202020"><span style="display:inline-block;vertical-align:top;font-size:9px;transform:scaleX(1.0000);transform-origin:left;">Ft</span></div>
<svg style="left:34px;top:270px" width="8" height="6" viewBox="0 0 8 6"><path d="M1 1.3 L4 4.4 L7 1.3" fill="none" stroke="#5a5a5a" stroke-width="1.2"/></svg>
<div class="t" style="left:56.5px;top:266.2px;height:14px;line-height:14px;color:#202020"><span style="display:inline-block;vertical-align:top;font-size:9.5px;transform:scaleX(0.8817);transform-origin:left;">Nettó össz.: 117 928,24 Ft; Áfa össz.: 31 840,62 Ft; Bruttó össz.: 149 768,86 Ft, ebből feldolgozatlan (nyitott): 129 080 Ft</span></div>
<div style="left:6px;top:292px;width:887px;height:1px;background:#dcdcdc"></div>
<svg style="left:443px;top:285px" width="13" height="4" viewBox="0 0 13 4"><rect x="0" y="0" width="1" height="1" fill="#bdbdbd"/><rect x="1" y="1" width="1" height="1" fill="#bdbdbd"/><rect x="0" y="2" width="1" height="1" fill="#bdbdbd"/><rect x="2" y="0" width="1" height="1" fill="#bdbdbd"/><rect x="3" y="1" width="1" height="1" fill="#bdbdbd"/><rect x="2" y="2" width="1" height="1" fill="#bdbdbd"/><rect x="4" y="0" width="1" height="1" fill="#bdbdbd"/><rect x="5" y="1" width="1" height="1" fill="#bdbdbd"/><rect x="4" y="2" width="1" height="1" fill="#bdbdbd"/><rect x="6" y="0" width="1" height="1" fill="#bdbdbd"/><rect x="7" y="1" width="1" height="1" fill="#bdbdbd"/><rect x="6" y="2" width="1" height="1" fill="#bdbdbd"/><rect x="8" y="0" width="1" height="1" fill="#bdbdbd"/><rect x="9" y="1" width="1" height="1" fill="#bdbdbd"/><rect x="8" y="2" width="1" height="1" fill="#bdbdbd"/><rect x="10" y="0" width="1" height="1" fill="#bdbdbd"/><rect x="11" y="1" width="1" height="1" fill="#bdbdbd"/><rect x="10" y="2" width="1" height="1" fill="#bdbdbd"/></svg>
<div style="left:9px;top:303px;width:36px;height:17px;background:#ffffff;border:1px solid #e0e0e0;border-bottom:none"></div>
<div class="t" style="left:13.899999999999999px;top:304.3px;height:14px;line-height:14px;color:#202020"><span style="display:inline-block;vertical-align:top;font-size:8.9px;transform:scaleX(0.8838);transform-origin:left;">Tételek</span></div>
<div style="left:45px;top:304px;width:46px;height:15px;background:#e9e9e9;border:1px solid #dcdcdc;border-left:none"></div>
<div class="t" style="left:48.0px;top:305.0px;height:13px;line-height:13px;color:#202020"><span style="display:inline-block;vertical-align:top;font-size:8.6px;transform:scaleX(0.8995);transform-origin:left;">Mellékletek</span></div>
<div style="left:91px;top:304px;width:55.5px;height:15px;background:#e9e9e9;border:1px solid #dcdcdc;border-left:none"></div>
<div class="t" style="left:95.5px;top:305.0px;height:13px;line-height:13px;color:#202020"><span style="display:inline-block;vertical-align:top;font-size:8.6px;transform:scaleX(0.9065);transform-origin:left;">Feljegyzések</span></div>
<div style="left:146.5px;top:304px;width:30.5px;height:15px;background:#e9e9e9;border:1px solid #dcdcdc;border-left:none"></div>
<div class="t" style="left:149.7px;top:305.0px;height:13px;line-height:13px;color:#202020"><span style="display:inline-block;vertical-align:top;font-size:8.6px;transform:scaleX(0.9077);transform-origin:left;">Tagek</span></div>
<div style="left:177px;top:304px;width:51px;height:15px;background:#e9e9e9;border:1px solid #dcdcdc;border-left:none"></div>
<div class="t" style="left:180.7px;top:305.0px;height:13px;line-height:13px;color:#202020"><span style="display:inline-block;vertical-align:top;font-size:8.6px;transform:scaleX(0.9217);transform-origin:left;">Megjegyzés</span></div>
<div style="left:228px;top:304px;width:41px;height:15px;background:#e9e9e9;border:1px solid #dcdcdc;border-left:none"></div>
<div class="t" style="left:231.39999999999998px;top:305.0px;height:13px;line-height:13px;color:#202020"><span style="display:inline-block;vertical-align:top;font-size:8.6px;transform:scaleX(0.9483);transform-origin:left;">Projektek</span></div>
<div style="left:8px;top:319px;width:881.5px;height:226px;background:#ffffff;border:1px solid #dedede"></div>
<div style="left:11px;top:321px;width:575px;height:18px;background:#eaeaea;border:1px solid #d8d8d8"></div>
<div style="left:146px;top:321px;width:1px;height:18px;background:#d2d2d2"></div>
<div style="left:230px;top:321px;width:1px;height:18px;background:#d2d2d2"></div>
<div style="left:285px;top:321px;width:1px;height:18px;background:#d2d2d2"></div>
<div style="left:341px;top:321px;width:1px;height:18px;background:#d2d2d2"></div>
<div style="left:419px;top:321px;width:1px;height:18px;background:#d2d2d2"></div>
<div style="left:513px;top:321px;width:1px;height:18px;background:#d2d2d2"></div>
<div class="t" style="left:28.4px;top:323.0px;height:14px;line-height:14px;color:#202020"><span style="display:inline-block;vertical-align:top;font-size:8.6px;transform:scaleX(0.9023);transform-origin:left;">SN/LOT kódok, sortiment elemek</span></div>
<div class="t" style="left:176.39999999999998px;top:323.0px;height:14px;line-height:14px;color:#202020"><span style="display:inline-block;vertical-align:top;font-size:8.6px;transform:scaleX(0.8919);transform-origin:left;">Foglalások</span></div>
<div class="t" style="left:260.7px;top:323.0px;height:14px;line-height:14px;color:#202020"><span style="display:inline-block;vertical-align:top;font-size:8.6px;transform:scaleX(0.9111);transform-origin:left;">Új</span></div>
<div class="t" style="left:306.4px;top:323.0px;height:14px;line-height:14px;color:#202020"><span style="display:inline-block;vertical-align:top;font-size:8.6px;transform:scaleX(0.9053);transform-origin:left;">Módosít</span></div>
<div class="t" style="left:365.7px;top:323.0px;height:14px;line-height:14px;color:#202020"><span style="display:inline-block;vertical-align:top;font-size:8.6px;transform:scaleX(0.9379);transform-origin:left;">Tétel storno</span></div>
<div class="t" style="left:440.09999999999997px;top:323.0px;height:14px;line-height:14px;color:#202020"><span style="display:inline-block;vertical-align:top;font-size:8.6px;transform:scaleX(0.8929);transform-origin:left;">Szállítói rendelések</span></div>
<div class="t" style="left:539.7px;top:323.0px;height:14px;line-height:14px;color:#202020"><span style="display:inline-block;vertical-align:top;font-size:8.6px;transform:scaleX(0.9139);transform-origin:left;">Cikk törzs</span></div>
<svg style="left:14px;top:324px" width="13" height="12" viewBox="0 0 13 12"><text x="1" y="5" font-size="4" font-family="Liberation Sans" fill="#555">SN</text><text x="5.5" y="11" font-size="3.6" font-family="Liberation Sans" fill="#555">LOT</text><path d="M1 11 L11 1" stroke="#f09a60" stroke-width="1"/></svg>
<svg style="left:163px;top:323px" width="11" height="14" viewBox="0 0 11 14"><rect x="1" y="2" width="8.5" height="11" fill="#fff" stroke="#666" stroke-width="1"/><rect x="3" y="1" width="4.5" height="2" fill="#666"/><path d="M3 6 H7.5 M3 8.5 H7.5 M3 11 H7.5" stroke="#666" stroke-width="0.9"/></svg>
<svg style="left:246px;top:324px" width="12" height="12" viewBox="0 0 12 12"><rect x="0" y="5.3" width="12" height="1.4" fill="#555"/><rect x="5.3" y="0" width="1.4" height="12" fill="#555"/></svg>
<svg style="left:292px;top:323px" width="12" height="13" viewBox="0 0 12 13"><polygon points="1,12 9.5,2 11,3.5 2.5,12.5" fill="#555"/></svg>
<svg style="left:351px;top:323px" width="14" height="14" viewBox="0 0 14 14"><rect x="1" y="7" width="9" height="6" rx="2" fill="#555"/><path d="M3 2 L12 10 M12 2 L3 10" stroke="#e0303a" stroke-width="1.6"/></svg>
<svg style="left:426px;top:323px" width="11" height="14" viewBox="0 0 11 14"><path d="M1 4 H8 M1 6.5 H9 M1 9 H9 M1 11.5 H9" stroke="#888" stroke-width="1.4"/><path d="M9 1 V3" stroke="#888" stroke-width="1"/></svg>
<svg style="left:524px;top:323px" width="14" height="14" viewBox="0 0 14 14"><path d="M2 12 H11" stroke="#f09a60" stroke-width="1.3"/><rect x="2" y="7" width="6" height="4" fill="#666"/><path d="M6 8 L12 2" stroke="#666" stroke-width="1.3"/></svg>
<div style="left:11px;top:342.5px;width:877px;height:199.5px;background:#ededed;border:1px solid #dcdcdc"></div>
<div style="left:21.5px;top:354px;width:255px;height:14px;background:#fff;border:1px solid #e0e0e0"></div>
<div style="left:281px;top:353px;width:43px;height:16px;background:#e6e6e6;border:1px solid #d0d0d0"></div>
<div class="t" style="left:291.7px;top:354.5px;height:13px;line-height:13px;color:#202020"><span style="display:inline-block;vertical-align:top;font-size:8.6px;transform:scaleX(0.8901);transform-origin:left;">Keres</span></div>
<div style="left:328px;top:353px;width:44px;height:16px;background:#e6e6e6;border:1px solid #d0d0d0"></div>
<div class="t" style="left:340.2px;top:354.5px;height:13px;line-height:13px;color:#202020"><span style="display:inline-block;vertical-align:top;font-size:8.6px;transform:scaleX(0.9083);transform-origin:left;">Töröl</span></div>
<div style="left:12px;top:378px;width:875px;height:13.5px;background:#fbfbfb;border-bottom:1px solid #e4e4e4"></div>
<div class="g" style="left:12px;top:378px;width:9.100000000000001px;height:13.5px;line-height:15px;border-right:1px solid #e0e0e0;color:#202020"><div class="w"></div></div>
<div class="g" style="left:20.3px;top:378px;width:73.8px;height:13.5px;line-height:15px;border-right:1px solid #e0e0e0;color:#202020"><div class="w"><span style="display:inline-block;vertical-align:top;font-size:8.4px;transform:scaleX(0.9148);transform-origin:left;">Cikkszám</span></div></div>
<div class="g" style="left:93.3px;top:378px;width:120.5px;height:13.5px;line-height:15px;border-right:1px solid #e0e0e0;color:#202020"><div class="w"><span style="display:inline-block;vertical-align:top;font-size:8.4px;transform:scaleX(0.8999);transform-origin:left;">Cikk</span></div></div>
<div class="g" style="left:213px;top:378px;width:51.999999999999986px;height:13.5px;line-height:15px;border-right:1px solid #e0e0e0;color:#202020"><div class="w"><span style="display:inline-block;vertical-align:top;font-size:8.4px;transform:scaleX(0.9144);transform-origin:left;">Mennyiség</span></div></div>
<div class="g" style="left:264.2px;top:378px;width:50.20000000000003px;height:13.5px;line-height:15px;border-right:1px solid #e0e0e0;color:#202020"><div class="w"><span style="display:inline-block;vertical-align:top;font-size:8.4px;transform:scaleX(0.9188);transform-origin:left;">Feldolgozott</span></div></div>
<div class="g" style="left:313.6px;top:378px;width:51.59999999999995px;height:13.5px;line-height:15px;border-right:1px solid #e0e0e0;color:#202020"><div class="w"><span style="display:inline-block;vertical-align:top;font-size:8.4px;transform:scaleX(0.9227);transform-origin:left;">Stornózott mennyiség</span></div></div>
<div class="g" style="left:364.4px;top:378px;width:50.8px;height:13.5px;line-height:15px;border-right:1px solid #e0e0e0;color:#202020"><div class="w"><span style="display:inline-block;vertical-align:top;font-size:8.4px;transform:scaleX(0.9224);transform-origin:left;">Foglalt mennyiség</span></div></div>
<div class="g" style="left:414.4px;top:378px;width:50.8px;height:13.5px;line-height:15px;border-right:1px solid #e0e0e0;color:#202020"><div class="w"><span style="display:inline-block;vertical-align:top;font-size:8.4px;transform:scaleX(0.9213);transform-origin:left;">Nyitott mennyiség</span></div></div>
<div class="g" style="left:464.4px;top:378px;width:27.500000000000046px;height:13.5px;line-height:15px;border-right:1px solid #e0e0e0;color:#202020"><div class="w"><span style="display:inline-block;vertical-align:top;font-size:8.4px;transform:scaleX(0.8949);transform-origin:left;">Me.</span></div></div>
<div class="g" style="left:491.1px;top:378px;width:50.3px;height:13.5px;line-height:15px;border-right:1px solid #e0e0e0;color:#202020"><div class="w"><span style="display:inline-block;vertical-align:top;font-size:8.4px;transform:scaleX(0.9147);transform-origin:left;">N° eár</span></div></div>
<div class="g" style="left:540.6px;top:378px;width:50.8px;height:13.5px;line-height:15px;border-right:1px solid #e0e0e0;color:#202020"><div class="w"><span style="display:inline-block;vertical-align:top;font-size:8.4px;transform:scaleX(0.9168);transform-origin:left;">Áfa kulcs</span></div></div>
<div class="g" style="left:590.6px;top:378px;width:51.3px;height:13.5px;line-height:15px;border-right:1px solid #e0e0e0;color:#202020"><div class="w"><span style="display:inline-block;vertical-align:top;font-size:8.4px;transform:scaleX(0.9195);transform-origin:left;">N° össz.</span></div></div>
<div class="g" style="left:641.1px;top:378px;width:50.8px;height:13.5px;line-height:15px;border-right:1px solid #e0e0e0;color:#202020"><div class="w"><span style="display:inline-block;vertical-align:top;font-size:8.4px;transform:scaleX(0.8946);transform-origin:left;">Áfa</span></div></div>
<div class="g" style="left:691.1px;top:378px;width:49.99999999999993px;height:13.5px;line-height:15px;border-right:1px solid #e0e0e0;color:#202020"><div class="w"><span style="display:inline-block;vertical-align:top;font-size:8.4px;transform:scaleX(0.9205);transform-origin:left;">B° össz.</span></div></div>
<div class="g" style="left:740.3px;top:378px;width:63.20000000000009px;height:13.5px;line-height:15px;border-right:1px solid #e0e0e0;color:#202020"><div class="w"><span style="display:inline-block;vertical-align:top;font-size:8.4px;transform:scaleX(0.9156);transform-origin:left;">Megjegyzés</span></div></div>
<div class="g" style="left:802.7px;top:378px;width:84.8999999999999px;height:13.5px;line-height:15px;border-right:1px solid #e0e0e0;color:#202020"><div class="w"><span style="display:inline-block;vertical-align:top;font-size:8.4px;transform:scaleX(0.9241);transform-origin:left;">Szállítói rendelt mennyiség</span></div></div>
<div style="left:14px;top:382px;width:5px;height:5px;border-radius:50%;background:#a8a8a8"></div>
<div style="left:20.3px;top:391.5px;width:866.5px;height:13.0px;background:#0576d8"></div>
<div style="left:11.5px;top:391.5px;width:9.8px;height:13.0px;background:#fbfbfb;border-right:1px solid #e0e0e0;border-bottom:1px solid #ececec"></div>
<div class="g" style="left:20.3px;top:391.5px;width:73.8px;height:13.0px;line-height:13.0px;color:#202020;border-right:1px solid #4a95dd;background:#d9d800"><div class="w"><span style="display:inline-block;vertical-align:top;font-size:8.4px;transform:scaleX(0.8777);transform-origin:left;">PCT8</span></div></div>
<div class="g" style="left:93.3px;top:391.5px;width:120.5px;height:13.0px;line-height:13.0px;color:#fff;border-right:1px solid #4a95dd;"><div class="w"><span style="display:inline-block;vertical-align:top;font-size:8.4px;transform:scaleX(0.8631);transform-origin:left;">ASZTALI SZÁMÍTÓGÉP (GY)</span></div></div>
<div class="g r" style="left:213px;top:391.5px;width:51.999999999999986px;height:13.0px;line-height:13.0px;color:#fff;border-right:1px solid #4a95dd;"><div class="w"><span style="display:inline-block;vertical-align:top;font-size:8.4px;transform:scaleX(0.9630);transform-origin:right;">1</span></div></div>
<div class="g r" style="left:264.2px;top:391.5px;width:50.20000000000003px;height:13.0px;line-height:13.0px;color:#fff;border-right:1px solid #4a95dd;"><div class="w"><span style="display:inline-block;vertical-align:top;font-size:8.4px;transform:scaleX(0.9630);transform-origin:right;">0</span></div></div>
<div class="g r" style="left:313.6px;top:391.5px;width:51.59999999999995px;height:13.0px;line-height:13.0px;color:#fff;border-right:1px solid #4a95dd;"><div class="w"><span style="display:inline-block;vertical-align:top;font-size:8.4px;transform:scaleX(0.9630);transform-origin:right;">0</span></div></div>
<div class="g r" style="left:364.4px;top:391.5px;width:50.8px;height:13.0px;line-height:13.0px;color:#fff;border-right:1px solid #4a95dd;"><div class="w"><span style="display:inline-block;vertical-align:top;font-size:8.4px;transform:scaleX(0.9630);transform-origin:right;">0</span></div></div>
<div class="g r" style="left:414.4px;top:391.5px;width:50.8px;height:13.0px;line-height:13.0px;color:#fff;border-right:1px solid #4a95dd;"><div class="w"><span style="display:inline-block;vertical-align:top;font-size:8.4px;transform:scaleX(0.9630);transform-origin:right;">1</span></div></div>
<div class="g" style="left:464.4px;top:391.5px;width:27.500000000000046px;height:13.0px;line-height:13.0px;color:#fff;border-right:1px solid #4a95dd;"><div class="w"><span style="display:inline-block;vertical-align:top;font-size:8.4px;transform:scaleX(0.9270);transform-origin:left;">db</span></div></div>
<div class="g r" style="left:491.1px;top:391.5px;width:50.3px;height:13.0px;line-height:13.0px;color:#fff;border-right:1px solid #4a95dd;"><div class="w"><span style="display:inline-block;vertical-align:top;font-size:8.4px;transform:scaleX(0.9621);transform-origin:right;">98 555</span></div></div>
<div class="g r" style="left:540.6px;top:391.5px;width:50.8px;height:13.0px;line-height:13.0px;color:#fff;border-right:1px solid #4a95dd;"><div class="w"><span style="display:inline-block;vertical-align:top;font-size:8.4px;transform:scaleX(0.9630);transform-origin:right;">27</span></div></div>
<div class="g r" style="left:590.6px;top:391.5px;width:51.3px;height:13.0px;line-height:13.0px;color:#fff;border-right:1px solid #4a95dd;"><div class="w"><span style="display:inline-block;vertical-align:top;font-size:8.4px;transform:scaleX(0.9621);transform-origin:right;">98 555</span></div></div>
<div class="g r" style="left:641.1px;top:391.5px;width:50.8px;height:13.0px;line-height:13.0px;color:#fff;border-right:1px solid #4a95dd;"><div class="w"><span style="display:inline-block;vertical-align:top;font-size:8.4px;transform:scaleX(0.9618);transform-origin:right;">26 609,85</span></div></div>
<div class="g r" style="left:691.1px;top:391.5px;width:49.99999999999993px;height:13.0px;line-height:13.0px;color:#fff;border-right:1px solid #4a95dd;"><div class="w"><span style="display:inline-block;vertical-align:top;font-size:8.4px;transform:scaleX(0.9619);transform-origin:right;">125 164,85</span></div></div>
<div class="g" style="left:740.3px;top:391.5px;width:63.20000000000009px;height:13.0px;line-height:13.0px;color:#fff;border-right:1px solid #4a95dd;"><div class="w"></div></div>
<div class="g" style="left:802.7px;top:391.5px;width:84.8999999999999px;height:13.0px;line-height:13.0px;color:#fff;border-right:1px solid #4a95dd;"><div class="w"></div></div>
<div style="left:20.3px;top:404.5px;width:866.5px;height:13.5px;background:#ffff00"></div>
<div style="left:11.5px;top:404.5px;width:9.8px;height:13.5px;background:#fbfbfb;border-right:1px solid #e0e0e0;border-bottom:1px solid #ececec"></div>
<div class="g" style="left:20.3px;top:404.5px;width:73.8px;height:13.5px;line-height:13.5px;color:#202020;border-right:1px solid #e4e490;"><div class="w"><span style="display:inline-block;vertical-align:top;font-size:8.4px;transform:scaleX(0.8930);transform-origin:left;">PCT62</span></div></div>
<div class="g" style="left:93.3px;top:404.5px;width:120.5px;height:13.5px;line-height:13.5px;color:#202020;border-right:1px solid #e4e490;"><div class="w"><span style="display:inline-block;vertical-align:top;font-size:8.4px;transform:scaleX(0.8540);transform-origin:left;">EVŐPÁLCIKA</span></div></div>
<div class="g r" style="left:213px;top:404.5px;width:51.999999999999986px;height:13.5px;line-height:13.5px;color:#202020;border-right:1px solid #e4e490;"><div class="w"><span style="display:inline-block;vertical-align:top;font-size:8.4px;transform:scaleX(0.9630);transform-origin:right;">1</span></div></div>
<div class="g r" style="left:264.2px;top:404.5px;width:50.20000000000003px;height:13.5px;line-height:13.5px;color:#202020;border-right:1px solid #e4e490;"><div class="w"><span style="display:inline-block;vertical-align:top;font-size:8.4px;transform:scaleX(0.9630);transform-origin:right;">0</span></div></div>
<div class="g r" style="left:313.6px;top:404.5px;width:51.59999999999995px;height:13.5px;line-height:13.5px;color:#202020;border-right:1px solid #e4e490;"><div class="w"><span style="display:inline-block;vertical-align:top;font-size:8.4px;transform:scaleX(0.9630);transform-origin:right;">0</span></div></div>
<div class="g r" style="left:364.4px;top:404.5px;width:50.8px;height:13.5px;line-height:13.5px;color:#202020;border-right:1px solid #e4e490;"><div class="w"><span style="display:inline-block;vertical-align:top;font-size:8.4px;transform:scaleX(0.9630);transform-origin:right;">0</span></div></div>
<div class="g r" style="left:414.4px;top:404.5px;width:50.8px;height:13.5px;line-height:13.5px;color:#202020;border-right:1px solid #e4e490;"><div class="w"><span style="display:inline-block;vertical-align:top;font-size:8.4px;transform:scaleX(0.9630);transform-origin:right;">1</span></div></div>
<div class="g" style="left:464.4px;top:404.5px;width:27.500000000000046px;height:13.5px;line-height:13.5px;color:#202020;border-right:1px solid #e4e490;"><div class="w"><span style="display:inline-block;vertical-align:top;font-size:8.4px;transform:scaleX(0.8957);transform-origin:left;">Pár</span></div></div>
<div class="g r" style="left:491.1px;top:404.5px;width:50.3px;height:13.5px;line-height:13.5px;color:#202020;border-right:1px solid #e4e490;"><div class="w"><span style="display:inline-block;vertical-align:top;font-size:8.4px;transform:scaleX(0.9630);transform-origin:right;">0</span></div></div>
<div class="g r" style="left:540.6px;top:404.5px;width:50.8px;height:13.5px;line-height:13.5px;color:#202020;border-right:1px solid #e4e490;"><div class="w"><span style="display:inline-block;vertical-align:top;font-size:8.4px;transform:scaleX(0.9630);transform-origin:right;">27</span></div></div>
<div class="g r" style="left:590.6px;top:404.5px;width:51.3px;height:13.5px;line-height:13.5px;color:#202020;border-right:1px solid #e4e490;"><div class="w"><span style="display:inline-block;vertical-align:top;font-size:8.4px;transform:scaleX(0.9630);transform-origin:right;">0</span></div></div>
<div class="g r" style="left:641.1px;top:404.5px;width:50.8px;height:13.5px;line-height:13.5px;color:#202020;border-right:1px solid #e4e490;"><div class="w"><span style="display:inline-block;vertical-align:top;font-size:8.4px;transform:scaleX(0.9630);transform-origin:right;">0</span></div></div>
<div class="g r" style="left:691.1px;top:404.5px;width:49.99999999999993px;height:13.5px;line-height:13.5px;color:#202020;border-right:1px solid #e4e490;"><div class="w"><span style="display:inline-block;vertical-align:top;font-size:8.4px;transform:scaleX(0.9630);transform-origin:right;">0</span></div></div>
<div class="g" style="left:740.3px;top:404.5px;width:63.20000000000009px;height:13.5px;line-height:13.5px;color:#202020;border-right:1px solid #e4e490;"><div class="w"><span style="display:inline-block;vertical-align:top;font-size:8.4px;transform:scaleX(0.8540);transform-origin:left;">EVŐPÁLCIKA</span></div></div>
<div class="g" style="left:802.7px;top:404.5px;width:84.8999999999999px;height:13.5px;line-height:13.5px;color:#202020;border-right:1px solid #e4e490;"><div class="w"></div></div>
<svg style="left:14px;top:394.5px" width="5" height="7" viewBox="0 0 5 7"><polygon points="0.5,0.5 4,3.5 0.5,6.5" fill="#444"/></svg>
<div style="left:5px;top:546px;width:889px;height:16px;background:#efefef;border:1px solid #cdcdcd"></div>
<div class="t" style="left:8px;top:548.0px;height:14px;line-height:14px;color:#202020"><span style="display:inline-block;vertical-align:top;font-size:9.3px;transform:scaleX(0.9184);transform-origin:left;">Alt+S - Szűrés; CTRL+H - Súgó; Alt+T - Részletek; Alt+N - Nyomtat; F9 - Sor/mező kijelölése; ESC - Bezár</span></div>
<svg style="left:886px;top:557px" width="6" height="6" viewBox="0 0 6 6"><rect x="4" y="0" width="1" height="1" fill="#999"/><rect x="2" y="2" width="1" height="1" fill="#999"/><rect x="4" y="2" width="1" height="1" fill="#999"/><rect x="0" y="4" width="1" height="1" fill="#999"/><rect x="2" y="4" width="1" height="1" fill="#999"/><rect x="4" y="4" width="1" height="1" fill="#999"/></svg></body></html>
